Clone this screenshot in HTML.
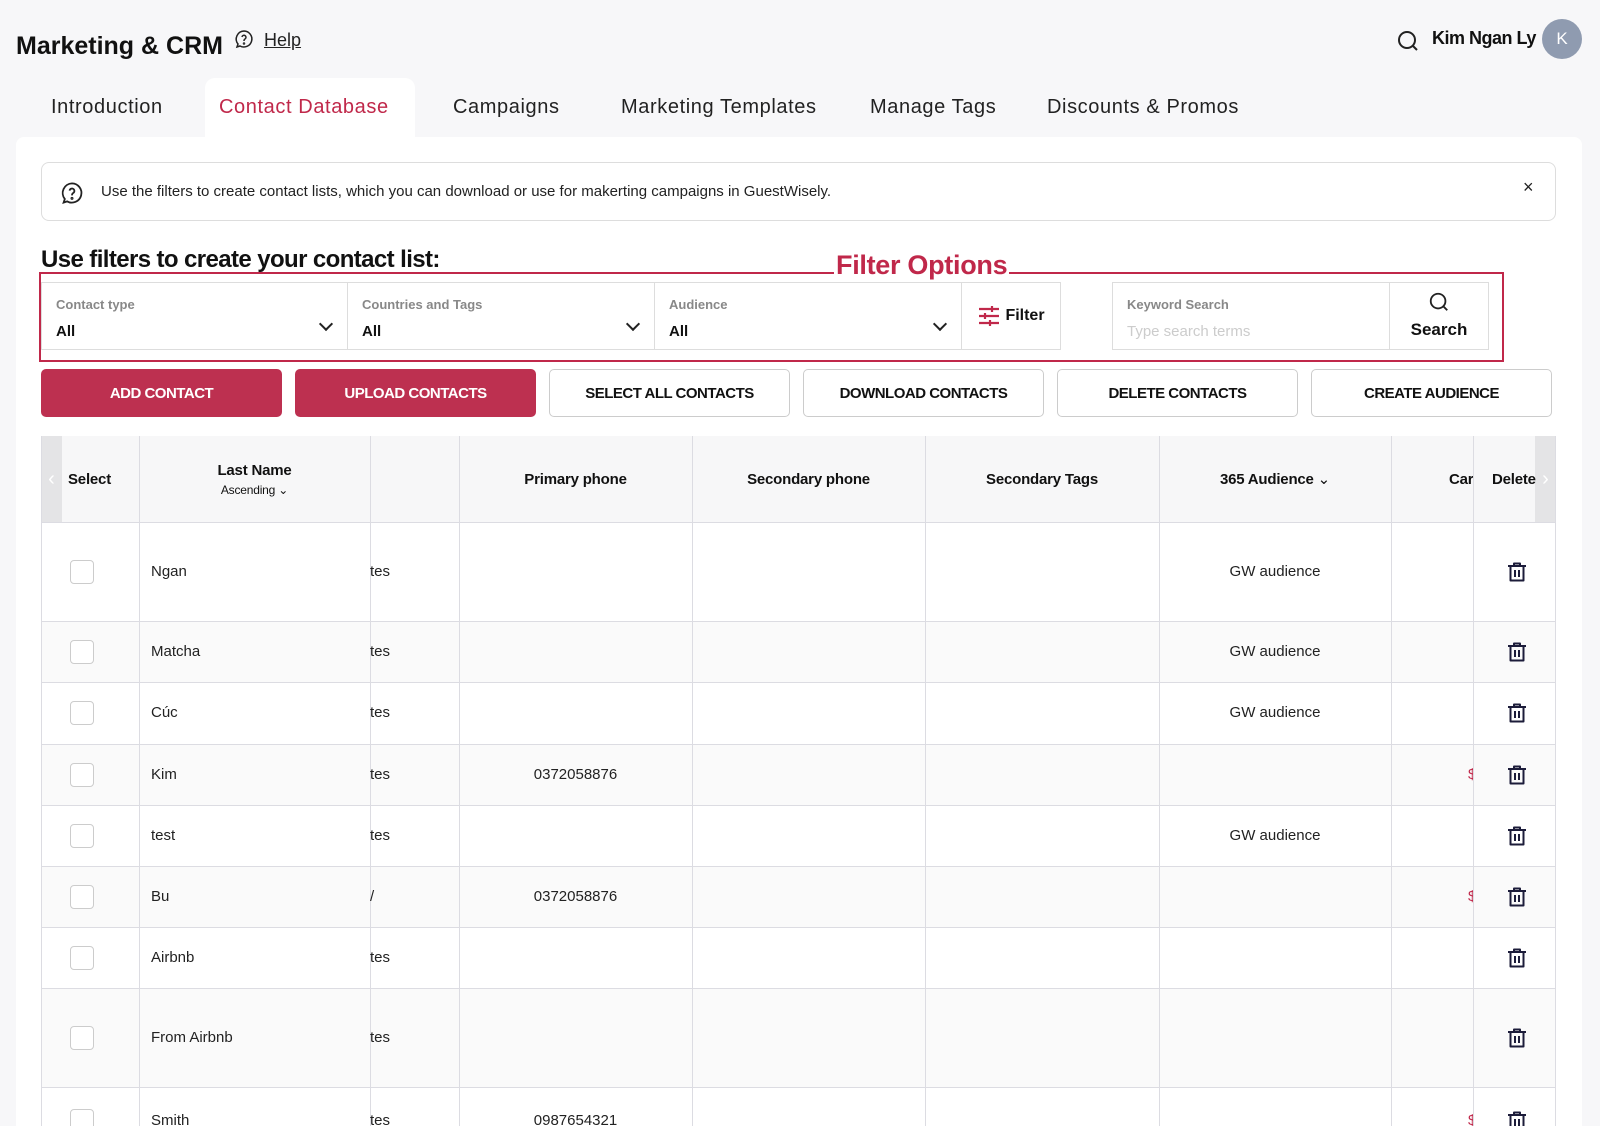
<!DOCTYPE html>
<html style="overflow:hidden"><head><meta charset="utf-8"><style>
*{box-sizing:border-box;margin:0;padding:0}
body{width:1600px;height:1126px;overflow:hidden;background:#f7f7f9;font-family:"Liberation Sans",sans-serif;color:#1a1a2e;position:relative}
.a{position:absolute}
.tab{position:absolute;top:96px;font-size:20px;color:#222;letter-spacing:.6px}
.panel{left:16px;top:137px;width:1566px;height:989px;background:#fff;border-radius:8px 8px 0 0}
.fbox{position:absolute;top:282px;height:68px;border:1px solid #ddd;background:#fff}
.lab{position:absolute;left:14px;top:14px;font-size:13px;color:#888;font-weight:bold}
.val{position:absolute;left:14px;top:40px;font-size:15px;font-weight:bold;color:#111}
.chev{position:absolute;right:16px;top:36px;width:10px;height:10px;border-right:2px solid #222;border-bottom:2px solid #222;transform:rotate(45deg)}
.btn{position:absolute;top:369px;width:241px;height:48px;border-radius:5px;font-size:15px;font-weight:bold;display:flex;align-items:center;justify-content:center;letter-spacing:-.5px}
.red{background:#bd3050;color:#fff}
.wh{background:#fff;border:1px solid #ccc;color:#111}
.th{position:absolute;top:436px;height:86px;font-size:15px;font-weight:bold;display:flex;align-items:center;justify-content:center;color:#111;letter-spacing:-.2px}
.vl{position:absolute;top:436px;width:1px;height:690px;background:#dcdce2}
.hl{position:absolute;left:41px;width:1515px;height:1px;background:#dcdce2}
.cell{position:absolute;font-size:15px;color:#222}
.cb{position:absolute;left:70px;width:24px;height:24px;border:1px solid #ccc;border-radius:4px;background:#fff}
</style></head><body>
<div class="a" style="left:16px;top:32px;font-size:25px;font-weight:bold;color:#111">Marketing &amp; CRM</div>
<svg class="a" style="left:234px;top:29px" width="20" height="20" viewBox="0 0 20 20" fill="none" stroke="#222" stroke-width="1.5"><path d="M10 2a8 8 0 1 1-4 15l-3 1 1-3A8 8 0 0 1 10 2z"/><path d="M8 8a2 2 0 1 1 3 2c-1 .5-1 1-1 2"/><circle cx="10" cy="14.5" r=".5"/></svg>
<div class="a" style="left:264px;top:30px;font-size:18px;color:#222;text-decoration:underline">Help</div>
<svg class="a" style="left:1396px;top:29px" width="24" height="24" viewBox="0 0 24 24" fill="none" stroke="#222" stroke-width="2"><circle cx="11" cy="11" r="8"/><path d="M17 17l4 4"/></svg>
<div class="a" style="left:1432px;top:28px;font-size:18px;font-weight:bold;color:#111;letter-spacing:-.5px">Kim Ngan Ly</div>
<div class="a" style="left:1542px;top:19px;width:40px;height:40px;border-radius:50%;background:#8f9bb0;color:#fff;font-size:17px;display:flex;align-items:center;justify-content:center">K</div>

<div class="a" style="left:205px;top:78px;width:210px;height:62px;background:#fff;border-radius:10px 10px 0 0"></div>
<div class="tab" style="left:51px">Introduction</div>
<div class="tab" style="left:219px;color:#c0284a">Contact Database</div>
<div class="tab" style="left:453px">Campaigns</div>
<div class="tab" style="left:621px">Marketing Templates</div>
<div class="tab" style="left:870px">Manage Tags</div>
<div class="tab" style="left:1047px">Discounts &amp; Promos</div>

<div class="a panel"></div>
<div class="a" style="left:41px;top:162px;width:1515px;height:59px;border:1px solid #ddd;border-radius:8px;background:#fff"></div>
<svg class="a" style="left:60px;top:181px" width="24" height="24" viewBox="0 0 20 20" fill="none" stroke="#222" stroke-width="1.5"><path d="M10 2a8 8 0 1 1-4 15l-3 1 1-3A8 8 0 0 1 10 2z"/><path d="M8 8a2 2 0 1 1 3 2c-1 .5-1 1-1 2"/><circle cx="10" cy="14.5" r=".5"/></svg>
<div class="a" style="left:101px;top:183px;font-size:15px;color:#222">Use the filters to create contact lists, which you can download or use for makerting campaigns in GuestWisely.</div>
<div class="a" style="left:1523px;top:177px;font-size:18px;color:#222">×</div>

<div class="a" style="left:41px;top:246px;font-size:24px;font-weight:bold;color:#111;letter-spacing:-.6px">Use filters to create your contact list:</div>
<div class="a" style="left:39px;top:272px;width:1465px;height:90px;border:2px solid #c0284a"></div>
<div class="a" style="left:834px;top:250px;background:#fff;padding:0 2px;font-size:27px;font-weight:bold;color:#c0284a;letter-spacing:-.3px">Filter Options</div>

<div class="fbox" style="left:41px;width:307px"><div class="lab">Contact type</div><div class="val">All</div><div class="chev"></div></div>
<div class="fbox" style="left:347px;width:308px"><div class="lab">Countries and Tags</div><div class="val">All</div><div class="chev"></div></div>
<div class="fbox" style="left:654px;width:308px"><div class="lab">Audience</div><div class="val">All</div><div class="chev"></div></div>
<div class="fbox" style="left:961px;width:100px;display:flex;align-items:center;justify-content:center;font-size:16px;font-weight:bold;color:#111">
<svg width="24" height="24" viewBox="0 0 24 24" stroke="#c0284a" stroke-width="2.2" style="margin-right:4px"><path d="M2 5h20M2 12h20M2 19h20M15 2v6M8 9v6M13 16v6"/></svg>Filter</div>
<div class="fbox" style="left:1112px;width:278px"><div class="lab">Keyword Search</div><div class="val" style="color:#ccc;font-weight:normal">Type search terms</div></div>
<div class="fbox" style="left:1389px;width:100px;text-align:center"><svg style="margin-top:8px" width="22" height="22" viewBox="0 0 24 24" fill="none" stroke="#222" stroke-width="2"><circle cx="11" cy="11" r="8"/><path d="M17 17l4 4"/></svg><div style="font-size:17px;font-weight:bold;color:#111;margin-top:2px">Search</div></div>

<div class="btn red" style="left:41px">ADD CONTACT</div>
<div class="btn red" style="left:295px">UPLOAD CONTACTS</div>
<div class="btn wh" style="left:549px">SELECT ALL CONTACTS</div>
<div class="btn wh" style="left:803px">DOWNLOAD CONTACTS</div>
<div class="btn wh" style="left:1057px">DELETE CONTACTS</div>
<div class="btn wh" style="left:1311px">CREATE AUDIENCE</div>

<div class="a" style="left:41px;top:436px;width:1515px;height:690px;border:1px solid #dcdce2;border-bottom:none;background:#fff"></div>
<div class="a" style="left:41px;top:436px;width:1515px;height:86px;background:#f7f7f8"></div>
<div class="a" style="left:41px;top:621px;width:1515px;height:61px;background:#fafafa"></div>
<div class="a" style="left:41px;top:744px;width:1515px;height:61px;background:#fafafa"></div>
<div class="a" style="left:41px;top:866px;width:1515px;height:61px;background:#fafafa"></div>
<div class="a" style="left:41px;top:988px;width:1515px;height:99px;background:#fafafa"></div>

<div class="a" style="left:41px;top:436px;width:21px;height:86px;background:#e4e4e6;color:#fff;font-size:20px;display:flex;align-items:center;justify-content:center">‹</div>
<div class="a" style="left:1535px;top:436px;width:21px;height:86px;background:#e4e4e6;color:#fff;font-size:20px;display:flex;align-items:center;justify-content:center">›</div>

<div class="vl" style="left:41px"></div><div class="vl" style="left:1555px"></div>
<div class="vl" style="left:139px"></div><div class="vl" style="left:370px"></div><div class="vl" style="left:459px"></div><div class="vl" style="left:692px"></div><div class="vl" style="left:925px"></div><div class="vl" style="left:1159px"></div><div class="vl" style="left:1391px"></div><div class="vl" style="left:1473px"></div>
<div class="hl" style="top:522px"></div><div class="hl" style="top:621px"></div><div class="hl" style="top:682px"></div><div class="hl" style="top:744px"></div><div class="hl" style="top:805px"></div><div class="hl" style="top:866px"></div><div class="hl" style="top:927px"></div><div class="hl" style="top:988px"></div><div class="hl" style="top:1087px"></div>

<div class="th" style="left:62px;width:77px;justify-content:flex-start;padding-left:6px">Select</div>
<div class="th" style="left:139px;width:231px;flex-direction:column"><div>Last Name</div><div style="font-size:12px;font-weight:normal;margin-top:4px">Ascending ⌄</div></div>
<div class="th" style="left:459px;width:233px">Primary phone</div>
<div class="th" style="left:692px;width:233px">Secondary phone</div>
<div class="th" style="left:925px;width:234px">Secondary Tags</div>
<div class="th" style="left:1159px;width:232px">365 Audience&nbsp;<span style="font-weight:normal">⌄</span></div>
<div class="th" style="left:1449px;width:24px;justify-content:flex-start;overflow:hidden">Car</div>
<div class="th" style="left:1492px;width:44px;justify-content:flex-start;overflow:hidden">Delete</div>

<div id="rows"></div>
<svg width="0" height="0" style="position:absolute"><defs><g id="tr" fill="none" stroke="#1c1c3a" stroke-width="2" stroke-linejoin="round"><path d="M3 6h18M9 6V3.5h6V6M5.5 6v14.5h13V6M10 10v7M14 10v7"/></g></defs></svg>
<script>
var rows=[["Ngan",572,"","GW audience",0],["Matcha",652,"","GW audience",0],["Cúc",713,"","GW audience",0],["Kim",775,"0372058876","",1],["test",836,"","GW audience",0],["Bu",897,"0372058876","",1],["Airbnb",958,"","",0],["From Airbnb",1038,"","",0],["Smith",1121,"0987654321","",1]];
var h="";rows.forEach(function(r){var y=r[1];
h+='<div class="cb" style="top:'+(y-12)+'px"></div>';
h+='<div class="cell" style="left:151px;top:'+(y-9)+'px">'+r[0]+'</div>';
h+='<div class="cell" style="left:370px;top:'+(y-9)+'px;width:20px;overflow:hidden">'+(r[0]=="Bu"?"/":"tes")+'</div>';
if(r[2])h+='<div class="cell" style="left:459px;width:233px;text-align:center;top:'+(y-9)+'px">'+r[2]+'</div>';
if(r[3])h+='<div class="cell" style="left:1159px;width:232px;text-align:center;top:'+(y-9)+'px">'+r[3]+'</div>';
if(r[4])h+='<div class="cell" style="left:1468px;width:5px;overflow:hidden;color:#c0284a;top:'+(y-9)+'px">$</div>';
h+='<svg class="a" style="left:1505px;top:'+(y-12)+'px" width="24" height="24" viewBox="0 0 24 24"><use href="#tr"/></svg>';
});document.getElementById("rows").innerHTML=h;
</script>
</body></html>
